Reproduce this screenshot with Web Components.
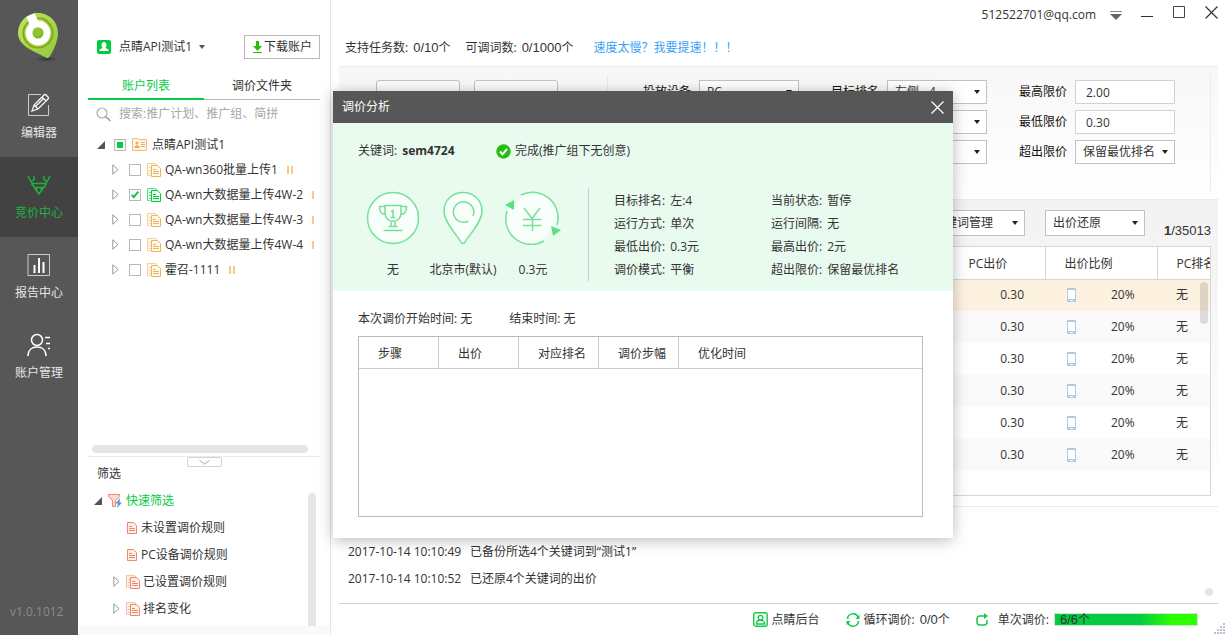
<!DOCTYPE html>
<html lang="zh-CN">
<head>
<meta charset="utf-8">
<title>点睛 - 竞价中心</title>
<style>
  html, body { margin: 0; }
  body {
    font: 12px/20px "Open Sans", "Noto Sans CJK SC", sans-serif;
    color: #333;
    background: #fff;
  }
</style>
</head>
<body>
<bid-app></bid-app>

<script>
const BASE = `
  *, *::before, *::after { box-sizing: border-box; }
  :host { box-sizing: border-box; white-space: nowrap; }
  :host([hidden]) { display: none; }
  button, input, select { font: inherit; color: inherit; margin: 0; }
  button { background: none; border: 0; padding: 0; cursor: pointer; }
  ul { list-style: none; margin: 0; padding: 0; }
`;

/* Registers an element whose shadow root is filled from css + markup. */
function element(name, css, markup, ready) {
  customElements.define(name, class extends HTMLElement {
    connectedCallback() {
      if (this.shadowRoot) return;
      const root = this.attachShadow({ mode: 'open' });
      const t = document.createElement('template');
      t.innerHTML = `<style>${BASE}${css}</style>` +
        (typeof markup === 'function' ? markup(this) : markup);
      root.appendChild(t.content.cloneNode(true));
      if (ready) ready(this, root);
    }
  });
}

/* ---------- icons ---------- */
const doc2 = (back, front, fill) => `
  <path d="M.5 12.5V.5h8l2 2" fill="${fill}" stroke="${back}"/><path d="M.5 12.5h3" stroke="${back}"/>
  <path d="M2 4.500h2M2 7.500h2M2 10.500h2" stroke="${back}"/>
  <path d="M4.500 2.500h6l3 3v8h-9z" fill="${fill}" stroke="${front}"/>
  <path d="M6 6.500h3M6 8.500h6M6 10.500h6" stroke="${front}"/>`;
const ICONS = {
  logo: [44, 52, `
    <defs>
      <linearGradient id="g" x1="0" y1="0" x2="1" y2="1"><stop offset="0" stop-color="#c2e465"/><stop offset="1" stop-color="#93c83a"/></linearGradient>
      <radialGradient id="s"><stop offset="0" stop-color="#222" stop-opacity=".6"/><stop offset="1" stop-color="#222" stop-opacity="0"/></radialGradient>
    </defs>
    <ellipse cx="31" cy="48" rx="12" ry="3" fill="url(#s)"/>
    <path d="M22 2a20 20 0 0 1 20 20c0 7-4 17-8 23-1 2-3 3-5 1C18 40 2 35 2 22A20 20 0 0 1 22 2z" fill="url(#g)"/>
    <circle cx="22" cy="22" r="15.500" fill="#7ea616"/>
    <circle cx="22" cy="22" r="14" fill="#a2c93a"/>
    <circle cx="22" cy="22" r="12.500" fill="#fff"/>
    <path d="M10.500 6l8-4 4 8-8 6z" fill="#fff"/>
    <path d="M18.500 2l5 8h5l3-5q-6-4-13-3z" fill="#b3da52"/>
    <path d="M21 7.500q5-1 9 1.500" stroke="#7ea616" stroke-width="1.500"/>
    <circle cx="22" cy="22" r="5.500" fill="#7db61c"/><circle cx="21.500" cy="21" r="4.500" fill="#8fc432"/>`],
  edit: [24, 24, `<path d="M14 1.500H1.500v21h20V12" stroke="#ccc"/>
    <path d="M5 18l2-6L17 2q1-1 2 0l2 2q1 1 0 2L11 16zM7 12l4 4M15 4l4 4M9 13l8-8" stroke="#fff" stroke-width="1.200"/>`],
  bid: [24, 24, `<path d="M4.500 10.500L12 21l7.500-10.500M1 3l4 7.500M23 3l-4 7.500M7 3v3.500L4 9M17 3v3.500L20 9M5 10.500h14M9 14l1 3M15 14l-1 3M8 14.500h8" stroke="#1eb33f" stroke-width="1.500"/>`],
  report: [24, 24, `<path d="M1 1.500h21.500v21H1z" stroke="#ccc"/><path d="M7.500 12v8M12 5v15M16.500 9v11" stroke="#fff" stroke-width="2"/>`],
  users: [24, 24, `<circle cx="10" cy="7" r="5.500" stroke="#fff" stroke-width="1.500"/><path d="M1 23c0-6 4-9 9-9s9 3 9 9M18 4.500h5M19 10.500h4M21 15.500h2" stroke="#fff" stroke-width="1.500"/>`],
  account: [14, 14, `<rect width="14" height="14" rx="2" fill="#04cc42"/><path d="M4.500 5c0-4 5-4 5 0 0 2-1 2-1 3l3 1.500V11h-9V9.500L5.500 8c0-1-1-1-1-3z" fill="#fff"/>`],
  download: [10, 12, `<path d="M4 0h3v5h3L5.500 10 1 5h3zM1 11h9v1H1z" fill="#2db80e"/>`],
  search: [15, 15, `<circle cx="6" cy="6" r="5" stroke="#aaa" stroke-width="1.200"/><path d="M9.500 9.500l5 4.500" stroke="#999" stroke-width="1.500"/>`],
  down: [6, 4, `<path d="M0 0h6L3 4z" fill="#555"/>`],
  caret: [6, 4, `<path d="M0 0h6L3 4z" fill="#222"/>`],
  opened: [8, 8, `<path d="M8 0v8H0z" fill="#555"/>`],
  closed: [7, 11, `<path d="M.8.800v9.400L6 5.500z" stroke="#999"/>`],
  folder: [15, 13, `<path d="M.5 12.500V.5h5l1 1h8v11z" fill="#fff6e6" stroke="#efbd74"/><circle cx="5" cy="5" r="1.500" fill="#efae55"/><path d="M2.500 10V8.500L5 7l2.500 1.500V10z" fill="#efae55"/><path d="M9 4.500h4M9 6.500h4M9 8.500h4" stroke="#efae55"/>`],
  docs: [14, 14, doc2('#f4cf98', '#eeb35f', '#fff8ec')],
  docsOn: [14, 14, doc2('#5ddc84', '#06c93d', '#eafbef')],
  docsRed: [14, 14, doc2('#f7bfae', '#ec8a6b', '#fdeee8')],
  docRed: [10, 12, `<path d="M.5.500h6l3 3v8h-9z" fill="#fdeee8" stroke="#ec8a6b"/><path d="M2 4.500h3M2 6.500h6M2 8.500h6" stroke="#ec8a6b"/>`],
  funnel: [14, 14, `<path d="M.5.500h11v2l-4 4v6h-3v-6l-4-4z" fill="#fad9ce" stroke="#ec8a6b"/><path d="M12 4L7.500 9.500H10L9 14l5-5.500h-2.500z" fill="#5b8fe0"/>`],
  pause: [6, 8, `<path d="M0 0h2v8H0zM4 0h2v8H4z" fill="#fbcb85"/>`],
  chevron: [11, 5, `<path d="M.5.500l5 3.500 5-3.500" stroke="#aaa"/>`],
  menu: [12, 9, `<path d="M0 .5h12" stroke="#888"/><path d="M0 3h12L6 9z" fill="#666"/>`],
  min: [12, 12, `<path d="M0 10.500h12" stroke="#333"/>`],
  max: [12, 12, `<path d="M.5.500h11v11H.5z" stroke="#444"/>`],
  close: [13, 13, `<path d="M.5.500l12 12M12.500.500l-12 12" stroke="#333" stroke-width="1.200"/>`],
  closeLight: [13, 13, `<path d="M.5.500l12 12M12.500.500l-12 12" stroke="#fff" stroke-width="1.200"/>`],
  phone: [9, 14, `<rect width="9" height="14" rx="1" fill="#b4c9e0"/><path d="M1 2h7v9H1z" fill="#fff"/><path d="M3 12.500h3" stroke="#fff"/>`],
  done: [15, 15, `<circle cx="7.500" cy="7.500" r="7.200" fill="#24bd0d"/><path d="M4 7.500l2.500 3L11 5" stroke="#fff" stroke-width="2"/>`],
  trophy: [54, 54, `<circle cx="27" cy="27" r="25.500" fill="#f8fffa" stroke="#75e198" stroke-width="1.500"/>
    <g stroke="#75e198" stroke-width="1.500"><path d="M19 14.500h16V22c0 11-16 11-16 0zM19 15.500h-5.500c0 5 1.500 8 6 8M35 15.500h5.500c0 5-1.500 8-6 8M25 31v4M29 31v4M22.500 35.500h9M17.500 39.500h19"/><path d="M25 20.500l2-1v7.500M24.500 26.500h5"/></g>`],
  pin: [40, 54, `<path d="M20 1.500c10 0 19 7 19 18.500C39 31 26 44 22 51q-2 3-4 0C14 44 1 31 1 20 1 8.500 10 1.500 20 1.500z" fill="#f8fffa" stroke="#75e198" stroke-width="1.500"/><path d="M25.500 30A10.200 10.200 0 1 1 30 25" stroke="#75e198" stroke-width="1.500"/>`],
  yen: [56, 54, `<circle cx="27" cy="27" r="25.500" fill="#f8fffa"/><path d="M7 9L15 2l2 3L9 15zM46 40l5 3-9 9-4-3z" fill="#e9faef"/>
    <path d="M16 4A25.500 25.500 0 0 1 52 34M39 50A25.500 25.500 0 0 1 2 20" stroke="#75e198" stroke-width="1.500"/>
    <path d="M0 14l9-5v10zM46 35l10 4-8 6z" fill="#5fdf86"/><path d="M19 17l8 10.500 8-10.500M27.500 27V40M18 28.500h18.500M18 34.500h18.500" stroke="#75e198" stroke-width="1.500"/>`],
  backend: [15, 15, `<rect x=".7" y=".7" width="13.500" height="13.500" rx="2" stroke="#16c94c" stroke-width="1.400"/><circle cx="7.500" cy="5.700" r="2.300" stroke="#16c94c" stroke-width="1.300"/><path d="M3.300 12c0-5 8.500-5 8.500 0z" stroke="#16c94c" stroke-width="1.300"/>`],
  cycle: [14, 14, `<path d="M1.500 6A5.500 5.500 0 0 1 12 4M12.500 8A5.500 5.500 0 0 1 2 10" stroke="#16c94c" stroke-width="1.500"/><path d="M13.500 1.500V6H9.500zM.5 12.500V8h4z" fill="#16c94c"/>`],
  once: [13, 13, `<path d="M10 3H4Q1 3 1 6v3q0 3 3 3h4q3 0 3-3V7" stroke="#16c94c" stroke-width="1.500"/><path d="M8 0l4 3-4 3z" fill="#16c94c"/>`],
  grip: [12, 12, `<path d="M9 1h2M6 4h2M9 4h2M3 7h2M6 7h2M9 7h2M0 10h2M3 10h2M6 10h2M9 10h2" stroke="#b9c0d0" stroke-width="2"/>`]
};
element('ui-icon', `:host { display: inline-flex; flex: none; } svg { display: block; }`, host => {
  const [w, h, body] = ICONS[host.getAttribute('name')];
  return `<svg width="${w}" height="${h}" viewBox="0 0 ${w} ${h}" fill="none" aria-hidden="true">${body}</svg>`;
});

/* ---------- form parts ---------- */
element('drop-down', `
  :host { display: inline-grid; width: 100px; align-items: center; }
  select, ui-icon { grid-area: 1 / 1; }
  select { appearance: none; width: 100%; height: 24px; padding: 0 18px 0 7px;
    border: 1px solid #c2c2c2; border-radius: 0; background: #fff; line-height: 20px; }
  :host([tall]) select { height: 26px; }
  ui-icon { justify-self: end; margin-right: 7px; pointer-events: none; }`,
  h => `<select aria-label="${h.getAttribute('label')}"><option>${h.getAttribute('value') || ''}</option></select><ui-icon name="caret"></ui-icon>`);

element('form-field', `
  :host { display: flex; align-items: center; gap: 8px; }
  label { width: 48px; color: #111; }
  input { width: 100px; height: 24px; border: 1px solid #d2d2d2; padding: 0 10px; background: #fff; }`,
  h => h.hasAttribute('select')
    ? `<label>${h.getAttribute('label')}</label><drop-down label="${h.getAttribute('label')}" value="${h.getAttribute('value') || ''}"></drop-down>`
    : `<label for="v">${h.getAttribute('label')}</label><input id="v" value="${h.getAttribute('value')}">`);

/* ---------- navigation rail ---------- */
element('nav-item', `
  :host { display: block; color: #e6e6e6; }
  :host([active]) { background: #424242; color: #1eb33f; }
  a { display: flex; flex-direction: column; align-items: center; gap: 6px; height: 80px; padding-top: 16px; color: inherit; text-decoration: none; }`,
  h => `<a href="#"><ui-icon name="${h.getAttribute('icon')}"></ui-icon><slot></slot></a>`);

element('nav-rail', `
  :host { display: flex; flex-direction: column; width: 78px; background: #575757; }
  .logo { display: flex; padding: 11px 0 14px 16px; }
  .version { margin: auto 0 13px 10px; color: #8c8c8c; }`, `
  <div class="logo"><ui-icon name="logo"></ui-icon></div>
  <nav>
    <nav-item icon="edit">编辑器</nav-item>
    <nav-item icon="bid" active>竞价中心</nav-item>
    <nav-item icon="report">报告中心</nav-item>
    <nav-item icon="users">账户管理</nav-item>
  </nav>
  <div class="version">v1.0.1012</div>`);

/* ---------- account panel ---------- */
element('tree-row', `
  :host { display: flex; align-items: center; height: 25px; padding-left: 34px; }
  :host([root]) { padding-left: 19px; }
  .arrow { flex: none; width: 17px; display: flex; }
  input { appearance: none; width: 12px; height: 12px; border: 1px solid #b8b8b8; background: #fff; display: grid; place-items: center; flex: none; }
  input:indeterminate::before { content: ""; width: 6px; height: 6px; background: #04cc42; }
  input:checked::before { content: ""; width: 4px; height: 8px; margin-bottom: 2px; border: solid #04cc42; border-width: 0 2px 2px 0; transform: rotate(40deg); }
  label { flex: none; display: flex; align-items: center; gap: 4px; margin: 0 9px 0 6px; }
  :host([root]) label { gap: 5px; }`,
  h => `<span class="arrow"><ui-icon name="${h.hasAttribute('root') ? 'opened' : 'closed'}"></ui-icon></span>
    <input type="checkbox" id="c" ${h.hasAttribute('checked') ? 'checked' : ''}>
    <label for="c"><ui-icon name="${h.getAttribute('icon') || 'docs'}"></ui-icon><slot></slot></label>
    ${h.hasAttribute('root') ? '' : '<ui-icon name="pause"></ui-icon>'}`,
  (h, root) => { if (h.hasAttribute('root')) root.querySelector('input').indeterminate = true; });

element('filter-row', `
  :host { display: flex; align-items: center; gap: 4px; height: 27px; padding-left: 49px; }
  :host([open]) { padding-left: 16px; color: #04cc42; }
  :host([group]) { padding-left: 35px; gap: 3px; }
  .arrow { flex: none; width: 10px; display: flex; }`,
  h => (h.hasAttribute('open') || h.hasAttribute('group')
      ? `<span class="arrow"><ui-icon name="${h.hasAttribute('open') ? 'opened' : 'closed'}"></ui-icon></span>` : '') +
    `<ui-icon name="${h.getAttribute('icon')}"></ui-icon><slot></slot>`);

element('account-panel', `
  :host { display: flex; flex-direction: column; width: 253px; border-right: 1px solid #e6e6e6; }
  .account { display: flex; align-items: center; padding: 35px 10px 0 19px; }
  .account .name { margin: 0 7px 0 8px; }
  .account button { display: flex; align-items: center; gap: 2px; height: 24px; margin-left: auto; padding: 0 7px; border: 1px solid #b9b9b9; background: #fff; }
  .tabs { display: grid; grid-template-columns: 1fr 1fr; margin: 16px 10px 0; }
  .tabs button { height: 25px; padding-bottom: 3px; border-bottom: 1px solid #b9b9b9; }
  .tabs button[aria-selected=true] { padding-bottom: 1px; color: #04cc42; border-bottom: 2px solid #04cc42; }
  .search { display: flex; align-items: center; gap: 6px; height: 28px; padding-left: 18px; }
  .search input { flex: 1; min-width: 0; border: 0; outline: 0; padding: 0 2px; background: none; }
  .search input::placeholder { color: #a8a8a8; opacity: 1; }
  .tree { margin: 4px 14px 0 0; overflow: hidden; }
  .hbar { height: 8px; margin: auto 22px 3px 14px; border-radius: 4px; background: #e5e5e5; }
  .split { display: flex; justify-content: center; height: 8px; margin: 0 10px; border-top: 1px solid #ebebeb; }
  .split button { display: grid; place-items: center; width: 35px; height: 10px; border: 1px solid #d2d2d2; border-radius: 2px; background: #fff; }
  h2 { margin: 0 0 0 19px; font: inherit; line-height: 20px; }
  .filters { display: flex; height: 142px; }
  .filters ul { flex: 1; padding-top: 3px; }
  .vbar { width: 8px; margin: 9px 14px 0 0; border-radius: 4px 4px 0 0; background: #e5e5e5; }
  .foot { height: 9px; background: #f9f9f9; }`, `
  <div class="account">
    <ui-icon name="account"></ui-icon><span class="name">点睛API测试1</span><ui-icon name="down"></ui-icon>
    <button><ui-icon name="download"></ui-icon>下载账户</button>
  </div>
  <div class="tabs" role="tablist">
    <button role="tab" aria-selected="true">账户列表</button><button role="tab" aria-selected="false">调价文件夹</button>
  </div>
  <div class="search"><ui-icon name="search"></ui-icon><input type="search" aria-label="搜索" placeholder="搜索:推广计划、推广组、简拼"></div>
  <div class="tree">
    <tree-row root icon="folder">点睛API测试1</tree-row>
    <tree-row>QA-wn360批量上传1</tree-row>
    <tree-row checked icon="docsOn">QA-wn大数据量上传4W-2</tree-row>
    <tree-row>QA-wn大数据量上传4W-3</tree-row>
    <tree-row>QA-wn大数据量上传4W-4</tree-row>
    <tree-row>霍召-1111</tree-row>
  </div>
  <div class="hbar"></div>
  <div class="split"><button aria-label="收起"><ui-icon name="chevron"></ui-icon></button></div>
  <h2>筛选</h2>
  <div class="filters">
    <ul>
      <li><filter-row open icon="funnel">快速筛选</filter-row></li>
      <li><filter-row icon="docRed">未设置调价规则</filter-row></li>
      <li><filter-row icon="docRed">PC设备调价规则</filter-row></li>
      <li><filter-row group icon="docsRed">已设置调价规则</filter-row></li>
      <li><filter-row group icon="docsRed">排名变化</filter-row></li>
    </ul>
    <div class="vbar"></div>
  </div>
  <div class="foot"></div>`);

/* ---------- main column ---------- */
element('window-bar', `
  :host { display: block; height: 66px; }
  .title { display: flex; align-items: flex-start; justify-content: flex-end; height: 38px; padding: 6px 8px 0 0; }
  .title span { margin: -1px 14px 0 0; line-height: 20px; }
  .title .menu { margin: 5px 19px 0 0; }
  .title .win { margin-right: 20px; }
  button { display: flex; }
  .quota { display: flex; align-items: center; gap: 15px; padding-left: 14px; line-height: 20px; }
  .quota div { display: flex; gap: 5px; }
  .num { font: 13px/20px "Liberation Sans", "Noto Sans CJK SC", sans-serif; }
  .num small { font-size: 12px; }
  a { color: #3a9ff5; text-decoration: none; margin-left: 5px; }`, `
  <div class="title">
    <span>512522701@qq.com</span>
    <button class="menu" aria-label="菜单"><ui-icon name="menu"></ui-icon></button>
    <button class="win" aria-label="最小化"><ui-icon name="min"></ui-icon></button>
    <button class="win" aria-label="最大化"><ui-icon name="max"></ui-icon></button>
    <button aria-label="关闭"><ui-icon name="close"></ui-icon></button>
  </div>
  <div class="quota">
    <div>支持任务数:<span class="num">0/10<small>个</small></span></div>
    <div>可调词数:<span class="num">0/1000<small>个</small></span></div>
    <a href="#">速度太慢？我要提速！！！</a>
  </div>`);

element('bid-filters', `
  :host { display: block; margin: 0 8px; border-top: 1px solid #ebebeb; padding: 8px 7px 8px 37px; background: linear-gradient(#f7f7f7, #fff); }
  .box { display: flex; min-height: 116px; border-right: 1px solid #ebebeb; }
  .actions { display: flex; gap: 14px; padding-top: 5px; }
  .actions button { width: 84px; height: 28px; border: 1px solid #c2c2c2; border-radius: 3px; background: #fcfcfc; }
  .fields { display: flex; gap: 32px; margin-left: 49px; padding: 5px 0 0 35px; border-left: 1px solid #ebebeb; }
  .col { display: flex; flex-direction: column; gap: 6px; align-items: flex-end; }`, `
  <div class="box">
    <div class="actions"><button aria-label="开始"></button><button aria-label="停止"></button></div>
    <div class="fields">
      <div class="col"><form-field select label="投放设备" value="PC"></form-field></div>
      <div class="col"><form-field select label="目标排名" value="左侧 - 4"></form-field>
        <drop-down label="运行方式"></drop-down><drop-down label="调价模式"></drop-down></div>
      <div class="col"><form-field label="最高限价" value="2.00"></form-field>
        <form-field label="最低限价" value="0.30"></form-field>
        <form-field select label="超出限价" value="保留最优排名"></form-field></div>
    </div>
  </div>`);

element('keyword-table', `
  :host { display: block; margin: 0 8px; padding: 10px 7px 10px 1px; border: solid #ebebeb; border-width: 1px 0; background: linear-gradient(#f2f2f2, #fff); }
  .tools { display: flex; align-items: flex-start; justify-content: flex-end; gap: 20px; height: 36px; }
  .count { width: 46px; padding-top: 11px; font: 13px/20px "Liberation Sans", sans-serif; display: flex; justify-content: flex-end; }
  .frame { display: flex; height: 250px; border: 1px solid #d6d6d6; background: #fff; overflow: hidden; position: relative; }
  table { width: 100%; table-layout: fixed; border-collapse: collapse; align-self: flex-start; }
  .bid { width: 96px; } .ratio { width: 112px; } .rank { width: 53px; }
  th, td { height: 32px; padding: 0 0 0 19px; font-weight: 400; text-align: left; }
  th { padding-top: 2px; border: solid #d6d6d6; border-width: 0 1px 1px 0; }
  th:last-child { border-right: 0; }
  td:nth-child(2) { padding: 0 21px 0 0; text-align: right; }
  td div { display: flex; align-items: center; gap: 35px; padding-left: 3px; }
  tbody tr:nth-child(even) { background: #fafafa; }
  tbody tr:first-child { background: #fdf2e0; }
  .bar { position: absolute; top: 35px; right: 2px; width: 8px; height: 42px; border-radius: 4px; background: rgba(0,0,0,.12); }`,
  () => `
  <div class="tools">
    <drop-down tall label="关键词管理" value="关键词管理"></drop-down>
    <drop-down tall label="出价还原" value="出价还原"></drop-down>
    <div class="count"><b>1</b>/35013</div>
  </div>
  <div class="frame">
    <table>
      <colgroup><col><col class="bid"><col class="ratio"><col class="rank"></colgroup>
      <thead><tr><th></th><th>PC出价</th><th>出价比例</th><th>PC排名</th></tr></thead>
      <tbody>${`<tr><td></td><td>0.30</td><td><div><ui-icon name="phone"></ui-icon>20%</div></td><td>无</td></tr>`.repeat(6)}</tbody>
    </table>
    <div class="bar"></div>
  </div>`);

element('activity-log', `
  :host { display: flex; flex: 1; justify-content: space-between; align-items: flex-end; margin: 0 8px; padding: 31px 5px 7px 9px; border-bottom: 1px solid #d2d2d2; }
  ul { align-self: flex-start; }
  li { display: flex; height: 27px; align-items: center; }
  time { width: 122px; }
  i { width: 8px; height: 8px; border-radius: 4px; background: #e5e5e5; }`, `
  <ul>
    <li><time>2017-10-14 10:10:49</time>已备份所选4个关键词到“测试1”</li>
    <li><time>2017-10-14 10:10:52</time>已还原4个关键词的出价</li>
  </ul><i></i>`);

element('status-bar', `
  :host { display: flex; justify-content: flex-end; align-items: center; height: 31px; }
  a { display: flex; align-items: center; gap: 4px; color: inherit; text-decoration: none; margin-right: 26px; }
  a > span { display: flex; gap: 5px; }
  .num { font: 13px/20px "Liberation Sans", "Noto Sans CJK SC", sans-serif; }
  .num small { font-size: 12px; }
  .once { gap: 9px; margin-right: 5px; }
  .progress { width: 144px; height: 13px; padding-left: 5px; display: flex; align-items: center; border: 1px solid #c9e8cf; background: linear-gradient(90deg, #04cc42 60%, #2bff00 82%); }
  .grip { align-self: flex-end; margin-left: 16px; }`, `
  <a href="#"><ui-icon name="backend"></ui-icon>点睛后台</a>
  <a href="#"><ui-icon name="cycle"></ui-icon><span>循环调价:<span class="num">0/0<small>个</small></span></span></a>
  <a href="#" class="once"><ui-icon name="once"></ui-icon>单次调价:</a>
  <div class="progress num" role="progressbar" aria-valuenow="6" aria-valuemax="6">6/6<small>个</small></div>
  <ui-icon class="grip" name="grip"></ui-icon>`);

/* ---------- analysis dialog ---------- */
element('goal-badge', `
  :host { display: flex; flex-direction: column; align-items: center; gap: 15px; width: 70px; }`,
  h => `<ui-icon name="${h.getAttribute('icon')}"></ui-icon><slot></slot>`);

element('analysis-dialog', `
  :host { display: block; width: 620px; background: #fff; box-shadow: 0 2px 14px rgba(0,0,0,.28); }
  header { display: flex; align-items: center; justify-content: space-between; height: 32px; padding: 0 9px; background: #575757; color: #fff; }
  header button { display: flex; }
  .summary { height: 168px; padding: 18px 25px 0; background: #e9faef; }
  .keyword { display: flex; }
  .keyword div { width: 138px; }
  .keyword b { margin-left: 2px; }
  .keyword span { display: flex; align-items: center; gap: 4px; }
  .goals { display: flex; margin-top: 27px; }
  goal-badge { padding-top: 3px; }
  dl { display: grid; grid-template-columns: 157px 1fr; grid-auto-rows: 23px; align-content: end; flex: 1; height: 93px; margin: 0 0 0 20px; padding-left: 25px; border-left: 1px solid #ccc; }
  dl div { display: flex; align-items: center; gap: 5px; }
  dd { margin: 0; }
  .times { display: flex; gap: 37px; padding: 18px 25px 7px; }
  .frame { height: 181px; margin: 0 30px 21px 25px; border: 1px solid #bbb; }
  table { width: 100%; table-layout: fixed; border-collapse: separate; border-spacing: 0; }
  col.step { width: 80px; }
  th { height: 32px; padding: 2px 0 0 19px; font-weight: 400; text-align: left; border: solid #ccc; border-width: 0 1px 1px 0; }
  th:last-child { border-right: 0; }`, `
  <header><span>调价分析</span><button aria-label="关闭"><ui-icon name="closeLight"></ui-icon></button></header>
  <section class="summary">
    <div class="keyword"><div>关键词: <b>sem4724</b></div><span><ui-icon name="done"></ui-icon>完成(推广组下无创意)</span></div>
    <div class="goals">
      <goal-badge icon="trophy">无</goal-badge>
      <goal-badge icon="pin">北京市(默认)</goal-badge>
      <goal-badge icon="yen">0.3元</goal-badge>
      <dl>
        <div><dt>目标排名:</dt><dd>左:4</dd></div><div><dt>当前状态:</dt><dd>暂停</dd></div>
        <div><dt>运行方式:</dt><dd>单次</dd></div><div><dt>运行间隔:</dt><dd>无</dd></div>
        <div><dt>最低出价:</dt><dd>0.3元</dd></div><div><dt>最高出价:</dt><dd>2元</dd></div>
        <div><dt>调价模式:</dt><dd>平衡</dd></div><div><dt>超出限价:</dt><dd>保留最优排名</dd></div>
      </dl>
    </div>
  </section>
  <div class="times"><span>本次调价开始时间: 无</span><span>结束时间: 无</span></div>
  <div class="frame">
    <table>
      <colgroup><col class="step"><col class="step"><col class="step"><col class="step"><col></colgroup>
      <thead><tr><th>步骤</th><th>出价</th><th>对应排名</th><th>调价步幅</th><th>优化时间</th></tr></thead>
    </table>
  </div>`, h => { h.setAttribute('role', 'dialog'); h.setAttribute('aria-label', '调价分析'); });

element('bid-app', `
  :host { display: flex; min-height: 100vh; position: relative; }
  main { display: flex; flex-direction: column; flex: 1; min-width: 0; }
  nav-rail, account-panel { flex: none; }
  analysis-dialog { position: absolute; left: 333px; top: 91px; }`, `
  <nav-rail></nav-rail>
  <account-panel></account-panel>
  <main>
    <window-bar></window-bar>
    <bid-filters></bid-filters>
    <keyword-table></keyword-table>
    <activity-log></activity-log>
    <status-bar></status-bar>
  </main>
  <analysis-dialog></analysis-dialog>`);
</script>
</body>
</html>
